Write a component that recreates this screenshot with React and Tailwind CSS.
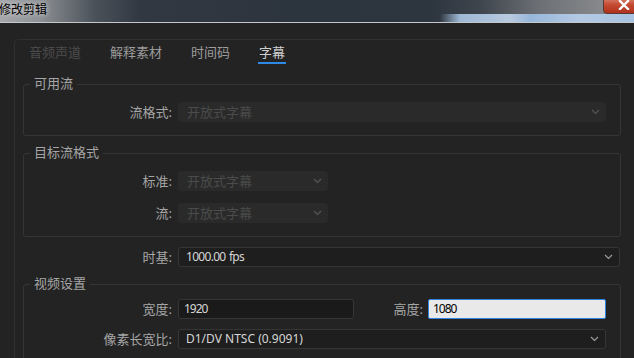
import { useState } from "react";

function Chevron({ color }) {
    return (
        <svg width="9" height="6" viewBox="0 0 9 6" className="shrink-0">
            <polyline points="1,1 4.5,4.5 8,1" fill="none" stroke={color} strokeWidth="1.1" />
        </svg>
    );
}

function Select({ value, width, disabled, numeric }) {
    return disabled ? (
        <div className={`${width} h-[20px] flex items-center justify-between pl-[9px] pr-[6px] rounded-[3px] bg-[#2a2a2a] text-[#4b4b4b]`}>
            <span>{value}</span>
            <Chevron color="#575757" />
        </div>
    ) : (
        <div className={`${width} h-[20px] flex items-center justify-between pl-[7px] pr-[6px] rounded-[3px] bg-[#1e1e1e] border border-[#363636] text-[#d6d6d6] text-[12px]`}>
            <span className={numeric ? "tracking-[-0.7px] [word-spacing:1px]" : ""}>{value}</span>
            <Chevron color="#a0a0a0" />
        </div>
    );
}

function Row({ label, labelW = "w-[149px]", children, className = "" }) {
    return (
        <div className={`flex items-center ${className}`}>
            <div className={`${labelW} text-right pr-[1px] text-[#a6a6a6]`}>{label}</div>
            <div className="ml-[5px] flex items-center">{children}</div>
        </div>
    );
}

function Group({ title, className = "", children }) {
    return (
        <div className={`relative w-[598px] border border-[#353535] rounded-[3px] ${className}`}>
            <span className="absolute -top-[9px] left-[6px] px-[4px] bg-[#232323] text-[#a6a6a6] leading-[14px]">
                {title}
            </span>
            {children}
        </div>
    );
}

const tabs = ["音频声道", "解释素材", "时间码", "字幕"];

export default function App() {
    const [active, setActive] = useState(3);

    return (
        <div className="w-[634px] h-[358px] overflow-hidden bg-[#232323] text-[13px] leading-[14px] font-['Noto_Sans','Noto_Sans_CJK_SC',sans-serif]">
            <div className="relative h-[23px] border-b border-[#c4c7cb] bg-[linear-gradient(90deg,#a4a6a9_0px,#8d9094_40px,#4a5159_95px,#313842_140px,#2c343e_300px,#2d353f_430px,#3e454d_480px,#6d7075_540px,#86888b_600px,#8a8c8f_634px)]">
                <div className="absolute left-[440px] right-0 bottom-0 h-[8px] bg-[linear-gradient(90deg,rgba(170,200,235,0)_0px,#a9c6e6_20px,#c3d6ec_70px,#9dbfe6_90px,#b9d2ee_140px,#aac9ea_194px)] opacity-90" />
                <span className="absolute left-[-1px] top-[3px] text-[12px] text-black [text-shadow:0_0_5px_#e8e8e8]">修改剪辑</span>
                <div className="absolute left-[603px] top-[-3px] w-[50px] h-[17px] rounded-b-[4px] border border-[#5a3a36] bg-[linear-gradient(180deg,#d8826f_0%,#c44a32_45%,#b0321d_100%)] flex items-center justify-center">
                    <svg width="12" height="10" viewBox="0 0 12 10" className="-translate-x-[4px] translate-y-[-1px]">
                        <path d="M2 1 L10 9 M10 1 L2 9" stroke="#ffffff" strokeWidth="2.4" strokeLinecap="square" />
                    </svg>
                </div>
            </div>

            <div className="pt-[16px] pl-[14px]">
                <div className="w-[700px] border-l border-t border-[#303030] rounded-tl-[5px] h-[330px]">
                    <div className="flex gap-[27px] pl-[13px] pt-[5px]">
                        {tabs.map((t, i) => (
                            <div
                                key={t}
                                className="flex flex-col cursor-default"
                                onClick={() => i > 0 && setActive(i)}
                            >
                                <span
                                    className={`px-[1px] ${
                                        i === 0 ? "text-[#4c4c4c]" : i === active ? "text-[#d0d0d0]" : "text-[#9c9c9c]"
                                    }`}
                                >
                                    {t}
                                </span>
                                <div className={`mt-[3px] h-[2px] ${i === active ? "bg-[#2f8ae6]" : ""}`} />
                            </div>
                        ))}
                    </div>

                    <div className="pl-[8px] pt-[20px]">
                        <Group title="可用流" className="pt-[17px] pb-[13px]">
                            <Row label="流格式:">
                                <Select value="开放式字幕" width="w-[428px]" disabled />
                            </Row>
                        </Group>

                        <Group title="目标流格式" className="mt-[17px] pt-[17px] pb-[13px]">
                            <Row label="标准:">
                                <Select value="开放式字幕" width="w-[150px]" disabled />
                            </Row>
                            <Row label="流:" className="mt-[12px]">
                                <Select value="开放式字幕" width="w-[150px]" disabled />
                            </Row>
                        </Group>

                        <Row label="时基:" labelW="w-[150px]" className="mt-[10px]">
                            <Select value="1000.00 fps" width="w-[442px]" numeric />
                        </Row>

                        <Group title="视频设置" className="mt-[17px] pt-[14px] pb-[12px]">
                            <Row label="宽度:">
                                <div className="w-[176px] h-[20px] flex items-center pl-[5px] rounded-[3px] bg-[#1a1a1a] border border-[#363636] text-[#d6d6d6] text-[12px] tracking-[-1px]">
                                    1920
                                </div>
                                <div className="w-[69px] text-right text-[#a6a6a6]">高度:</div>
                                <div className="ml-[5px] w-[178px] h-[20px] flex items-center pl-[4px] rounded-[2px] bg-[#e9e9e9] border border-[#2e83e4] text-black text-[12px] tracking-[-1px]">
                                    1080
                                </div>
                            </Row>
                            <Row label="像素长宽比:" className="mt-[10px]">
                                <Select value="D1/DV NTSC (0.9091)" width="w-[428px]" />
                            </Row>
                        </Group>
                    </div>
                </div>
            </div>
        </div>
    );
}
